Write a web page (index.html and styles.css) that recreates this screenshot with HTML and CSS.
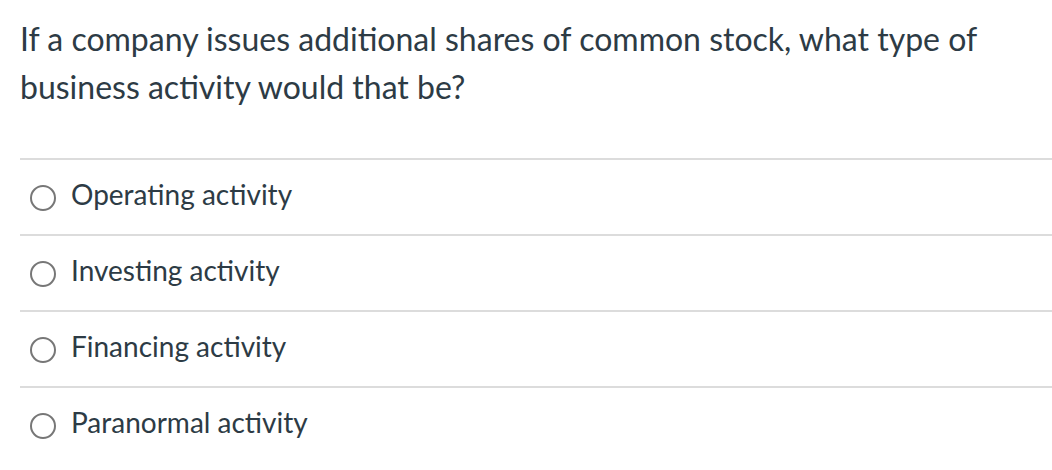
FILE: index.html
```html
<!DOCTYPE html>
<html>
<head>
<meta charset="utf-8">
<link rel="stylesheet" href="styles.css">
</head>
<body>
<div class="question">
  <p class="prompt">If a company issues additional shares of common stock, what type of business activity would that be?</p>
  <div class="answers">
    <label class="answer"><span class="radio"></span><span class="label">Operating activity</span></label>
    <label class="answer"><span class="radio"></span><span class="label">Investing activity</span></label>
    <label class="answer"><span class="radio"></span><span class="label">Financing activity</span></label>
    <label class="answer"><span class="radio"></span><span class="label">Paranormal activity</span></label>
  </div>
</div>
</body>
</html>
```

FILE: styles.css
```css
html, body {
  margin: 0;
  padding: 0;
  background: #fff;
}
body {
  font-family: Lato, "Open Sans", sans-serif;
  color: #2d3b45;
}
.question {
  padding-left: 20px;
}
.prompt {
  margin: 0;
  padding-top: 15px;
  font-size: 32px;
  line-height: 48px;
  width: 1010px;
}
.answers {
  margin-top: 47px;
}
.answer {
  display: flex;
  align-items: center;
  height: 74px;
  border-top: 2px solid #dcdcdc;
}
.radio {
  width: 22px;
  height: 22px;
  border: 2px solid #777;
  border-radius: 50%;
  margin-left: 10px;
  margin-right: 15px;
  margin-top: 2px;
  box-sizing: content-box;
  flex: none;
}
.label {
  font-size: 28px;
  line-height: 34px;
  padding-bottom: 6px;
}
```
